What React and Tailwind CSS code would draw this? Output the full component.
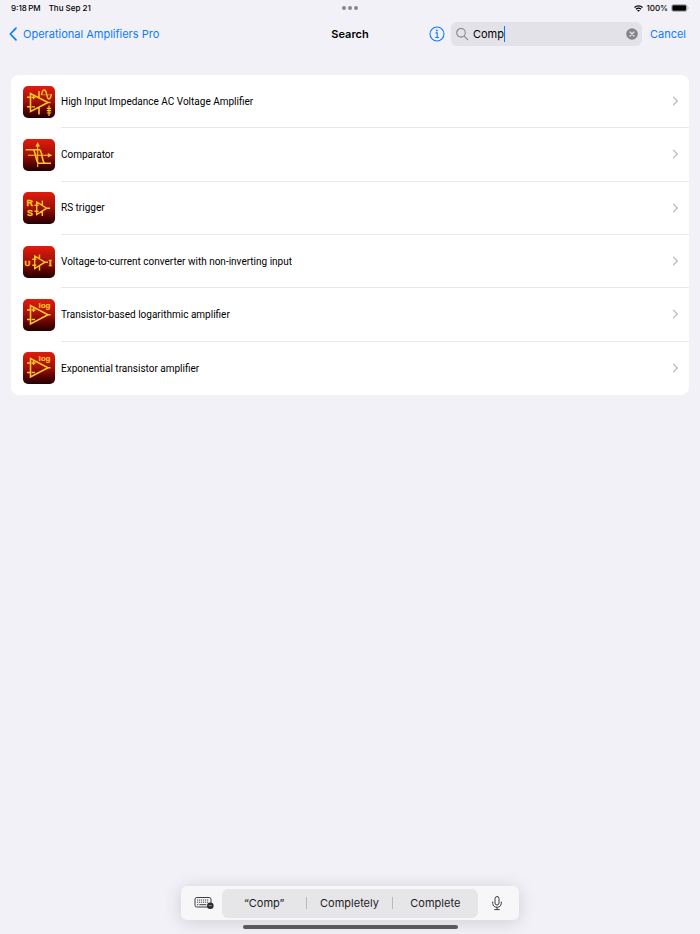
import { useState } from 'react'

const IconTile = ({ children }) => (
  <span className="size-8 shrink-0 overflow-hidden rounded-[5px] bg-linear-to-b from-[#e31b0c] via-[#a01008] to-[#240000]">
    <svg viewBox="0 0 32 32" className="size-8" fill="none" stroke="#fcc62b" strokeWidth="1.6" aria-hidden="true">
      {children}
    </svg>
  </span>
)

const HighImpedanceIcon = () => (
  <IconTile>
    <path d="M7.5 7.5v18l17.500-9zM24 16.500h3.500M16 5v7M16 21v7.500M4 11.300h3.500M4 20.800h3.500" />
    <path d="M8.500 11.300h4M10.500 9.300v4M8.500 20.800h3.500" strokeWidth="1.3" />
    <path d="M18.500 9c1-6.500 4-6.500 5.200-.5s3.500 6 4.800-.5" strokeWidth="1.4" />
    <path d="M18.500 8.800h10.500" strokeWidth=".6" />
    <path d="M26 19.500v10.500M23.800 22.300h4.400M23.800 24.600h4.400M23.800 27h4.400" strokeWidth="1.2" />
  </IconTile>
)

const ComparatorIcon = () => (
  <IconTile>
    <path d="M14.700 28V6M5 16.300h22" strokeWidth="1.1" />
    <path d="M14.700 3l-2.300 4.500h4.600zM29.300 16.300l-4.500-2.200v4.400z" fill="#fcc62b" stroke="none" />
    <path d="M2.700 10.700h13.500c2 0 2 3 2.800 6.500s1.200 7 3.200 7H28M9.500 10.700c2 0 2.300 3 3.200 6.500s1.300 7 3.300 7h6.500" />
  </IconTile>
)

const RsTriggerIcon = () => (
  <IconTile>
    <path d="M13.700 10v12.500l10-6.300zM22.500 16.200h4.500M19.300 8.500v5M19.300 19v5M11.500 13.200h4M11.500 19.200h4" strokeWidth="1.4" />
    <g fill="#fcc62b" stroke="#fcc62b" strokeWidth=".3" fontFamily="Liberation Sans, sans-serif" fontWeight="bold" fontSize="9">
      <text x="3.5" y="14">R</text>
      <text x="4" y="23.5">S</text>
    </g>
  </IconTile>
)

const ConverterIcon = () => (
  <IconTile>
    <path d="M11.700 10v12.500l10.300-6.300zM21 16.200h4M16.500 8.500v4.500M16.500 19.500v5M9.300 13.200h4M9.300 19.200h4" strokeWidth="1.4" />
    <g fill="#fcc62b" stroke="#fcc62b" strokeWidth=".3" fontWeight="bold" fontSize="8">
      <text x="1.5" y="19.5" fontFamily="Liberation Sans, sans-serif">U</text>
      <text x="25.5" y="19.5" fontSize="9" fontFamily="Liberation Serif, serif">I</text>
    </g>
  </IconTile>
)

const LogIcon = () => (
  <IconTile>
    <path d="M7.500 6.500v18.500l17.500-9.200zM24 15.800h3.500M4 11h3.500M4 20.500h3.500" />
    <path d="M8.500 11h4M10.500 9v4M8.500 20.500h3.500" strokeWidth="1.3" />
    <text x="15.5" y="9" fill="#fcc62b" strokeWidth=".2" fontFamily="Liberation Sans, sans-serif" fontWeight="bold" fontSize="8">log</text>
  </IconTile>
)

const results = [
  { name: 'High Input Impedance AC Voltage Amplifier', icon: <HighImpedanceIcon /> },
  { name: 'Comparator', icon: <ComparatorIcon /> },
  { name: 'RS trigger', icon: <RsTriggerIcon /> },
  { name: 'Voltage-to-current converter with non-inverting input', icon: <ConverterIcon /> },
  { name: 'Transistor-based logarithmic amplifier', icon: <LogIcon /> },
  { name: 'Exponential transistor amplifier', icon: <LogIcon /> },
]

const StatusBar = () => (
  <div className="grid h-4 grid-cols-3 items-center px-[11px] text-[8px] font-medium">
    <div className="flex gap-2">
      <span>{'9:18\u2009PM'}</span>
      <span>Thu Sep 21</span>
    </div>
    <div className="flex justify-center gap-0.5">
      <span className="size-1 rounded-full bg-[#88888c]" />
      <span className="size-1 rounded-full bg-[#88888c]" />
      <span className="size-1 rounded-full bg-[#88888c]" />
    </div>
    <div className="flex items-center justify-end gap-[3px]">
      <svg viewBox="0 0 18 14" className="h-[7px] w-[9px]" fill="none" stroke="#000" strokeWidth="2.6" aria-hidden="true">
        <path d="M1 5c4.500-4.300 11.500-4.300 16 0M4 8.700c2.800-2.600 7.200-2.600 10 0" />
        <path d="M9 13.700l-2.800-2.900c1.600-1.300 4-1.300 5.600 0z" fill="#000" stroke="none" />
      </svg>
      <span>100%</span>
      <svg viewBox="0 0 18 8" className="h-2 w-[18px]" aria-hidden="true">
        <rect x=".5" y=".5" width="15.5" height="7" rx="2" fill="none" stroke="#a5a5a9" strokeWidth=".8" />
        <rect x="1.3" y="1.3" width="13.9" height="5.4" rx="1.2" />
        <path d="M16.900 2.800c1 .4 1 2 0 2.400z" fill="#a5a5a9" />
      </svg>
    </div>
  </div>
)

const App = () => {
  const [query, setQuery] = useState('Comp')

  return (
    <div className="flex min-h-screen flex-col bg-[#f2f1f7] font-['Inter','Liberation_Sans',sans-serif] text-black">
      <StatusBar />

      <header className="grid grid-cols-[1fr_auto_1fr] items-center px-3.5 pt-1.5 text-[11px] leading-4">
        <a href="#home" className="-ml-1.5 flex items-center gap-[5px] text-[#087cff]">
          <svg viewBox="0 0 10 16" className="h-4 w-2.5" fill="none" stroke="currentColor" strokeWidth="1.7" strokeLinecap="round" strokeLinejoin="round" aria-hidden="true">
            <path d="M8 2.200L2.300 8 8 13.800" />
          </svg>
          Operational Amplifiers Pro
        </a>
        <h1 className="font-semibold">Search</h1>
        <div className="flex items-center justify-end">
          <button type="button" aria-label="Information" className="mr-1.5 text-[#087cff]">
            <svg viewBox="0 0 16 16" className="size-4" fill="none" stroke="currentColor" strokeWidth="1.1" aria-hidden="true">
              <circle cx="8" cy="8" r="7" />
              <path d="M6.500 6.900h1.700v4.500M6.300 11.500h3.700" />
              <circle cx="7.9" cy="4.5" r=".9" fill="currentColor" stroke="none" />
            </svg>
          </button>
          <div className="flex h-6 w-[191px] items-center rounded-md bg-[#e3e2e8] px-1">
            <svg viewBox="0 0 14 14" className="mr-1 size-3.5 shrink-0" fill="none" stroke="#85858a" strokeWidth="1.1" strokeLinecap="round" aria-hidden="true">
              <circle cx="6" cy="5.8" r="4.3" />
              <path d="M9.200 9.200l3.500 3.500" />
            </svg>
            <input
              type="text"
              aria-label="Search"
              value={query}
              onChange={(e) => setQuery(e.target.value)}
              className="field-sizing-content max-w-36 bg-transparent caret-transparent outline-none"
            />
            <span className="h-4 w-px shrink-0 bg-[#087cff]" />
            <button type="button" aria-label="Clear" onClick={() => setQuery('')} className="ml-auto">
              <svg viewBox="0 0 12 12" className="size-3" aria-hidden="true">
                <circle cx="6" cy="6" r="5.8" fill="#838388" />
                <path d="M4 4l4 4M8 4L4 8" stroke="#e9e8ee" strokeWidth="1.2" strokeLinecap="round" />
              </svg>
            </button>
          </div>
          <button type="button" className="ml-2 text-[#087cff]">Cancel</button>
        </div>
      </header>

      <main className="px-[11px] pt-[29px]">
        <ul className="flex min-h-80 flex-col overflow-hidden rounded-lg bg-white font-['Roboto','Inter',sans-serif]">
          {results.map((item) => (
            <li key={item.name} className="group flex flex-1">
              <a href="#result" className="flex flex-1 items-center gap-1.5 pl-3 text-[10px]">
                {item.icon}
                <span className="flex flex-1 items-center justify-between self-stretch border-b border-[#e8e8ea] pr-2.5 group-last:border-0">
                  {item.name}
                  <svg viewBox="0 0 7 10" className="h-2.5 w-[7px]" fill="none" stroke="#b8b8bc" strokeWidth="1.2" strokeLinecap="round" strokeLinejoin="round" aria-hidden="true">
                    <path d="M1.500 1.200L5.300 5 1.500 8.800" />
                  </svg>
                </span>
              </a>
            </li>
          ))}
        </ul>
      </main>

      <footer className="mt-auto flex flex-col items-center gap-[5px] pb-[5px]">
        <div className="flex h-[34px] w-[338px] items-center rounded-md bg-[#f7f7f9] shadow-[0_2px_18px_rgba(0,0,0,0.15)]">
          <button type="button" aria-label="Hide keyboard" className="flex w-[41px] justify-center pl-1">
            <svg viewBox="0 0 20 14" className="h-3.5 w-5" fill="none" stroke="#3c3c3e" strokeWidth="1" aria-hidden="true">
              <rect x="1" y="1.5" width="16" height="9.5" rx="1.8" />
              <path d="M3 4h12M3 6.200h12" strokeDasharray="1.2 .8" />
              <path d="M3 8.700h1.300M5.300 8.700h7" />
              <circle cx="16.3" cy="9.7" r="3.3" fill="#2c2c2e" stroke="none" />
              <path d="M14.800 9.700h3" stroke="#bbb" strokeWidth=".7" />
            </svg>
          </button>
          <div className="grid h-[29px] flex-1 grid-cols-3 items-center divide-x divide-[#b9b9bc] rounded-md bg-[#e6e6e8] text-[11px] leading-3 text-[#1c1c1e]">
            <button type="button">“Comp”</button>
            <button type="button">Completely</button>
            <button type="button">Complete</button>
          </div>
          <button type="button" aria-label="Dictate" className="flex w-[41px] justify-center pr-1">
            <svg viewBox="0 0 12 16" className="h-4 w-3" fill="none" stroke="#3c3c3e" strokeWidth="1" strokeLinecap="round" aria-hidden="true">
              <rect x="4" y="1.5" width="4" height="8.5" rx="2" />
              <path d="M1.700 7v1.300c0 5.300 8.600 5.300 8.600 0V7M6 12.300v2.200M3.700 14.600h4.600" />
            </svg>
          </button>
        </div>
        <div className="h-1 w-[215px] rounded-full bg-[#59595b]" />
      </footer>
    </div>
  )
}

export default App
